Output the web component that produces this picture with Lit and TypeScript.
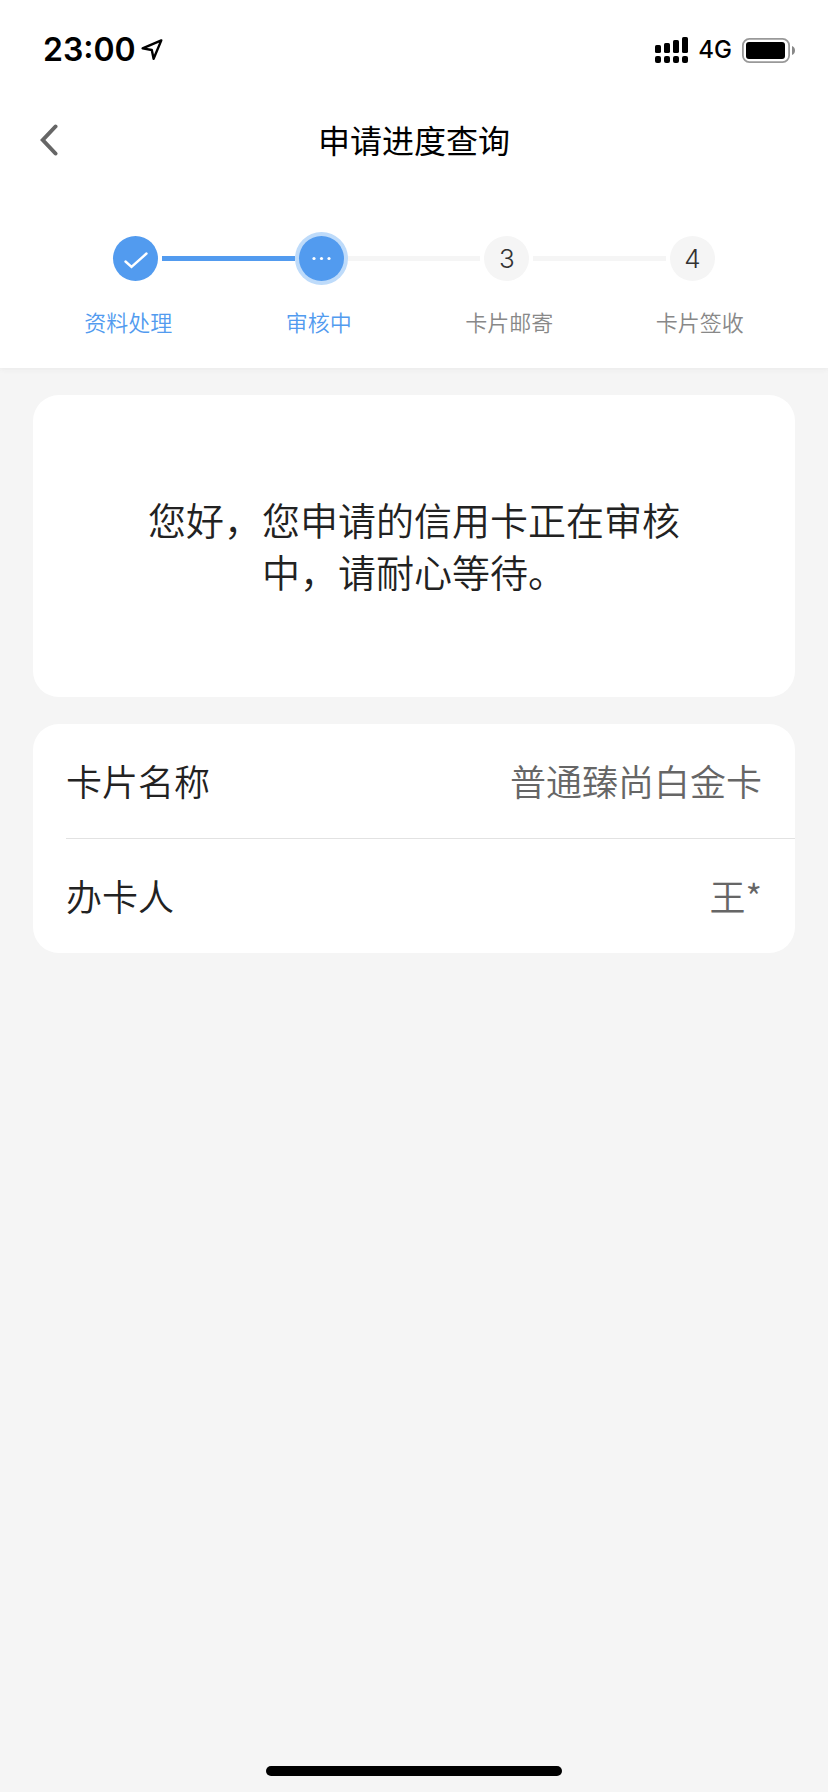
import { LitElement, html, css, svg, nothing } from "lit";
import { customElement, property } from "lit/decorators.js";
import { classMap } from "lit/directives/class-map.js";

type StepState = "done" | "active" | "pending";

interface Step {
  label: string;
  state: StepState;
}

@customElement("status-bar")
class StatusBar extends LitElement {
  static styles = css`
    :host {
      display: flex;
      justify-content: space-between;
      align-items: center;
      height: 100px;
      padding: 0 33px 0 43px;
      color: #000;
      font-family: Inter, "Liberation Sans", sans-serif;
    }
    .group {
      display: flex;
      align-items: center;
    }
    .left {
      gap: 5px;
    }
    .right {
      gap: 10px;
    }
    .time {
      font-size: 32px;
      line-height: 40px;
      font-weight: 600;
    }
    .network {
      font-size: 24px;
      line-height: 32px;
      font-weight: 500;
    }
    svg {
      display: block;
    }
  `;

  render() {
    const heights = [8, 10, 13, 16];
    return html`
      <div class="group left">
        <span class="time">23:00</span>
        <svg width="22" height="22" viewBox="0 0 22 22" fill="none" stroke="#000" stroke-width="2.4" stroke-linejoin="round" aria-hidden="true">
          <path d="M20.3 1.4 1.6 9.4 10.8 11 12.6 19.8Z" />
        </svg>
      </div>
      <div class="group right">
        <svg width="33" height="26" viewBox="0 0 33 26" aria-hidden="true">
          ${heights.map(
            (h, i) => svg`
              <rect x=${i * 9} y=${16 - h} width="6" height=${h} rx="1.6" />
              <rect x=${i * 9} y="19" width="6" height="7" rx="2" />`
          )}
        </svg>
        <span class="network">4G</span>
        <svg width="53" height="25" viewBox="0 0 53 25" aria-hidden="true">
          <rect x="0.9" y="0.9" width="46.2" height="23.2" rx="6.5" fill="none" stroke="#999" stroke-width="1.8" />
          <rect x="4" y="4" width="39" height="17" rx="3" />
          <path d="M50 8c4 1.500 4 7.500 0 9Z" fill="#888" />
        </svg>
      </div>
    `;
  }
}

@customElement("progress-steps")
class ProgressSteps extends LitElement {
  @property({ attribute: false }) steps: Step[] = [];

  static styles = css`
    :host {
      display: block;
    }
    .track {
      display: flex;
      align-items: center;
      padding: 0 109px;
    }
    .dot {
      box-sizing: border-box;
      flex: none;
      display: flex;
      align-items: center;
      justify-content: center;
      width: 45px;
      height: 45px;
      margin: 4px;
      border-radius: 50%;
      background: #f5f5f5;
      color: #333;
      font: 300 26px/32px Inter, "Liberation Sans", sans-serif;
    }
    .done,
    .active {
      background: #529bef;
    }
    .active {
      box-shadow: 0 0 0 4px #bedbfa;
    }
    .line {
      flex: 1;
      height: 5px;
      background: #f5f5f5;
    }
    .line.reached {
      background: #529bef;
    }
    .labels {
      display: grid;
      grid-template-columns: repeat(4, 1fr);
      margin: 20px 0 0;
      padding: 0 33px;
      list-style: none;
      text-align: center;
      font-size: 22px;
      line-height: 32px;
      color: #888;
    }
    .current {
      color: #529bef;
    }
  `;

  private mark(step: Step, index: number) {
    if (step.state === "done") {
      return html`<svg width="45" height="45" viewBox="0 0 45 45" fill="none" stroke="#fff" stroke-width="2.4" stroke-linecap="round" stroke-linejoin="miter">
        <path d="M12.500 25.500 18.500 31 33.500 17.500" />
      </svg>`;
    }
    if (step.state === "active") {
      return html`<svg width="45" height="45" viewBox="0 0 45 45" fill="#fff">
        <circle cx="15" cy="22.500" r="1.600" />
        <circle cx="22.500" cy="22.500" r="1.600" />
        <circle cx="30" cy="22.500" r="1.600" />
      </svg>`;
    }
    return index + 1;
  }

  render() {
    return html`
      <div class="track" aria-hidden="true">
        ${this.steps.map(
          (step, i) => html`
            ${i > 0
              ? html`<span class=${classMap({ line: true, reached: step.state !== "pending" })}></span>`
              : nothing}
            <span class=${classMap({ dot: true, [step.state]: true })}>${this.mark(step, i)}</span>
          `
        )}
      </div>
      <ol class="labels">
        ${this.steps.map(
          (step) => html`<li
            class=${classMap({ current: step.state !== "pending" })}
            aria-current=${step.state === "active" ? "step" : nothing}
          >${step.label}</li>`
        )}
      </ol>
    `;
  }
}

@customElement("app-root")
class AppRoot extends LitElement {
  private steps: Step[] = [
    { label: "资料处理", state: "done" },
    { label: "审核中", state: "active" },
    { label: "卡片邮寄", state: "pending" },
    { label: "卡片签收", state: "pending" },
  ];

  private details = [
    { name: "卡片名称", value: "普通臻尚白金卡" },
    { name: "办卡人", value: "王*" },
  ];

  static styles = css`
    :host {
      display: flex;
      flex-direction: column;
      box-sizing: border-box;
      min-height: 100vh;
      background: #f5f5f5;
      color: #222;
      font-family: "Noto Sans CJK SC", sans-serif;
      font-weight: 350;
    }
    .top {
      padding-bottom: 31px;
      background: #fff;
      box-shadow: 0 1px 5px #e8e8e8;
    }
    .nav {
      display: grid;
      grid-template-columns: 100px 1fr 100px;
      align-items: center;
      height: 80px;
      margin-bottom: 52px;
    }
    .back {
      justify-self: start;
      display: flex;
      margin: 0;
      padding: 8px 20px 8px 40px;
      border: 0;
      background: none;
      cursor: pointer;
    }
    .title {
      margin: 0;
      padding-bottom: 2px;
      text-align: center;
      font-size: 32px;
      line-height: 48px;
      font-weight: 400;
      color: #000;
    }
    .content {
      flex: 1;
      display: flex;
      flex-direction: column;
      gap: 27px;
      padding: 27px 33px;
    }
    .card {
      margin: 0;
      border-radius: 26px;
      background: #fff;
    }
    .message {
      padding: 98px 100px 100px;
      text-align: center;
      font-size: 38px;
      line-height: 52px;
    }
    .row {
      display: flex;
      justify-content: space-between;
      align-items: center;
      margin-left: 33px;
      padding: 29px 33px 31px 0;
      font-size: 36px;
      line-height: 54px;
    }
    .row + .row {
      border-top: 1px solid #e2e2e2;
    }
    .value {
      margin: 0;
      color: #666;
    }
    .home {
      align-self: center;
      width: 296px;
      height: 10px;
      margin-bottom: 16px;
      border-radius: 5px;
      background: #000;
    }
  `;

  render() {
    return html`
      <header class="top">
        <status-bar></status-bar>
        <div class="nav">
          <button class="back" type="button" aria-label="返回">
            <svg width="18" height="32" viewBox="0 0 18 32" fill="none" stroke="#666" stroke-width="4" stroke-linecap="round" aria-hidden="true">
              <path d="M15.500 2.500 2.800 16 15.500 29.500" />
            </svg>
          </button>
          <h1 class="title">申请进度查询</h1>
        </div>
        <progress-steps .steps=${this.steps}></progress-steps>
      </header>
      <main class="content">
        <p class="card message">您好，您申请的信用卡正在审核中，请耐心等待。</p>
        <dl class="card">
          ${this.details.map(
            (item) => html`
              <div class="row">
                <dt>${item.name}</dt>
                <dd class="value">${item.value}</dd>
              </div>
            `
          )}
        </dl>
      </main>
      <div class="home" aria-hidden="true"></div>
    `;
  }
}
